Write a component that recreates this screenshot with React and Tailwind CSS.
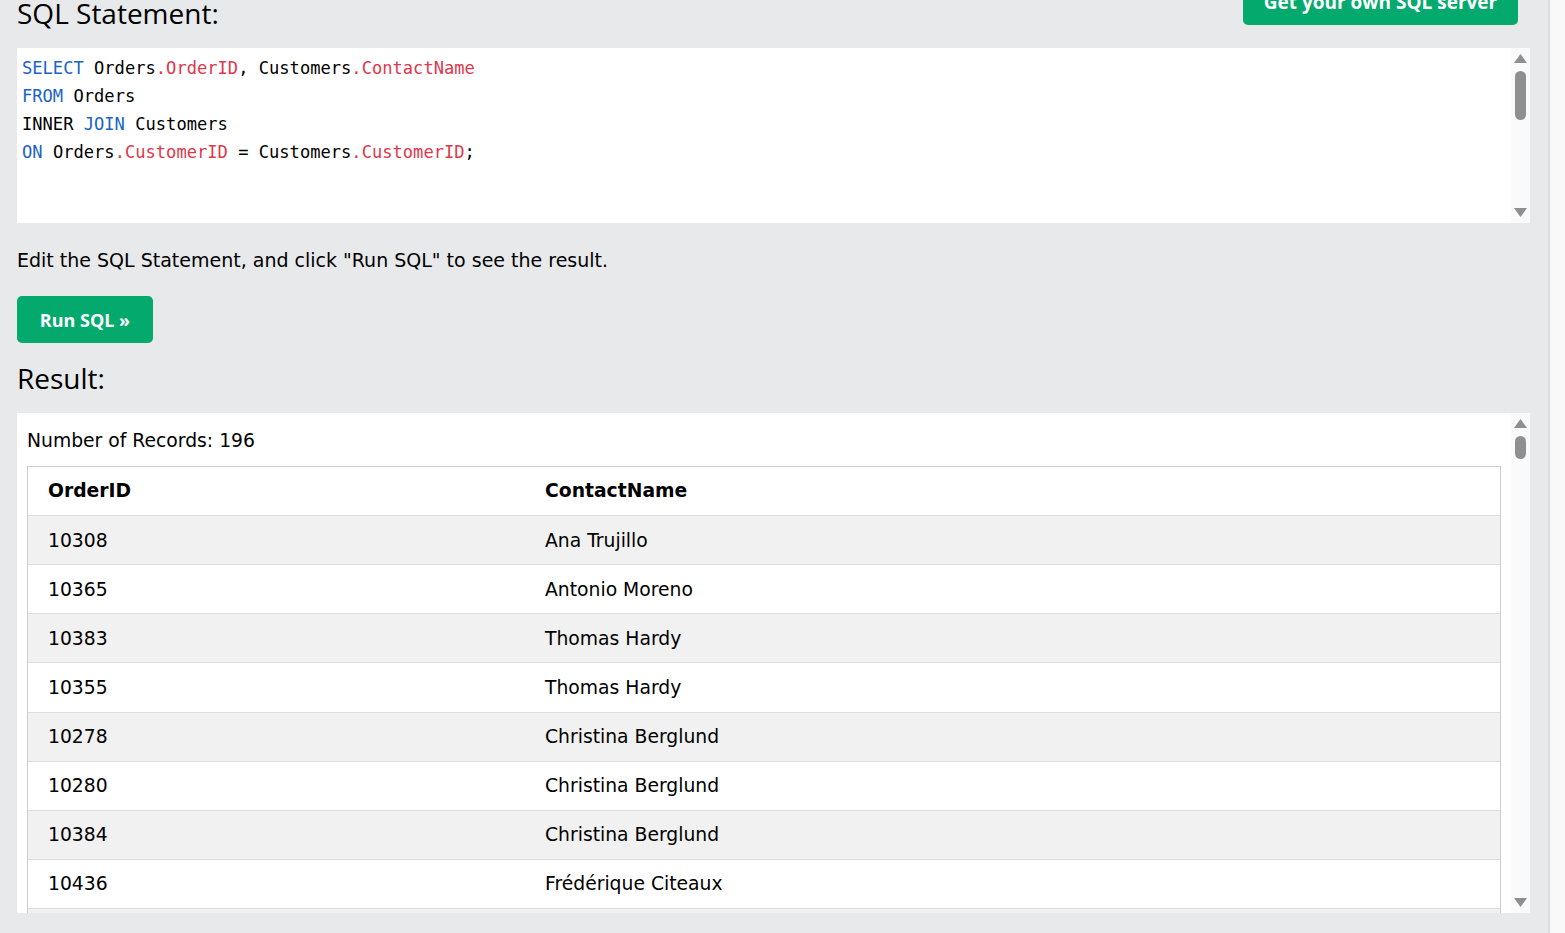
import React from 'react';

const rows = [
  ['10308', 'Ana Trujillo'],
  ['10365', 'Antonio Moreno'],
  ['10383', 'Thomas Hardy'],
  ['10355', 'Thomas Hardy'],
  ['10278', 'Christina Berglund'],
  ['10280', 'Christina Berglund'],
  ['10384', 'Christina Berglund'],
  ['10436', 'Frédérique Citeaux'],
  ['10265', 'Frédérique Citeaux'],
];

const Kw = ({ children }) => <span className="text-[#1a63c9]">{children}</span>;
const Fld = ({ children }) => <span className="text-[#e0374b]">{children}</span>;

const UpArrow = () => (
  <svg width="13" height="9" viewBox="0 0 13 9" className="block">
    <path d="M6.5 0 L13 9 L0 9 Z" fill="#8f8f8f" />
  </svg>
);

const DownArrow = () => (
  <svg width="13" height="9" viewBox="0 0 13 9" className="block">
    <path d="M0 0 L13 0 L6.5 9 Z" fill="#8f8f8f" />
  </svg>
);

const ScrollTrack = ({ thumbTop, thumbHeight, arrowGap }) => (
  <div className="w-[19px] bg-[#fafafa] flex flex-col items-center justify-between" style={{ paddingTop: arrowGap, paddingBottom: arrowGap }}>
    <div className="flex flex-col items-center">
      <UpArrow />
      <div className="w-[11px] rounded-full bg-[#8f8f8f]" style={{ marginTop: thumbTop, height: thumbHeight }} />
    </div>
    <DownArrow />
  </div>
);

const App = () => {
  return (
    <div className="flex h-[933px] w-full overflow-hidden" style={{ fontFamily: '"DejaVu Sans", Verdana, sans-serif' }}>
      <div className="w-[1548px] shrink-0 bg-[#e7e9eb] pl-[17px] pr-[18px] text-black">
        {/* header */}
        <div className="h-[48px] flex justify-between items-start">
          <h3 className="mt-[-5px] text-[28px] leading-[36px] font-normal" style={{ fontFamily: '"Open Sans", sans-serif' }}>
            SQL Statement:
          </h3>
          <a className="mt-[-21px] mr-[12px] h-[46px] w-[275px] flex items-center justify-center rounded-[5px] bg-[#04aa6d] text-white text-[19px] font-bold" style={{ fontFamily: '"Open Sans", sans-serif' }}>
            Get your own SQL server
          </a>
        </div>

        {/* editor */}
        <div className="h-[175px] bg-white flex">
          <div className="flex-1 pl-[5px] pt-[6px] text-[17.1px] leading-[28px] whitespace-pre" style={{ fontFamily: '"DejaVu Sans Mono", monospace' }}>
            <div><Kw>SELECT</Kw> Orders<Fld>.OrderID</Fld>, Customers<Fld>.ContactName</Fld></div>
            <div><Kw>FROM</Kw> Orders</div>
            <div>INNER <Kw>JOIN</Kw> Customers</div>
            <div><Kw>ON</Kw> Orders<Fld>.CustomerID</Fld> = Customers<Fld>.CustomerID</Fld>;</div>
          </div>
          <ScrollTrack thumbTop={8} thumbHeight={49} arrowGap={6} />
        </div>

        <p className="mt-[23px] mb-[-1px] text-[19px] leading-[28px]">
          Edit the SQL Statement, and click "Run SQL" to see the result.
        </p>

        <button className="mt-[23px] h-[47px] w-[136px] pt-[1px] rounded-[5px] bg-[#04aa6d] text-white text-[18px] font-bold" style={{ fontFamily: '"Open Sans", sans-serif' }}>
          Run SQL »
        </button>

        <h3 className="mt-[17px] text-[28px] leading-[36px] font-normal" style={{ fontFamily: '"Open Sans", sans-serif' }}>
          Result:
        </h3>

        {/* result */}
        <div className="mt-[17px] h-[500px] bg-white flex">
          <div className="flex-1 overflow-hidden pl-[10px] pr-[10px] pt-[15px]">
            <div className="text-[18.75px] leading-[26px]">Number of Records: 196</div>
            <div className="mt-[12px] border border-[#cccccc] text-[18.75px]">
              <div className="flex h-[49px] items-center pt-[1px] border-b border-[#dddddd] bg-white font-bold">
                <div className="w-[496px] pl-[20px]">OrderID</div>
                <div className="flex-1 pl-[21px]">ContactName</div>
              </div>
              {rows.map(([id, name], i) => (
                <div
                  key={i}
                  className={`flex h-[49.125px] items-center pt-[1px] border-b border-[#dddddd] ${i % 2 === 0 ? 'bg-[#f1f1f1]' : 'bg-white'}`}
                >
                  <div className="w-[496px] pl-[20px]">{id}</div>
                  <div className="flex-1 pl-[21px]">{name}</div>
                </div>
              ))}
            </div>
          </div>
          <ScrollTrack thumbTop={8} thumbHeight={23} arrowGap={6} />
        </div>
      </div>
      <div className="w-[2px] shrink-0 bg-[#dadcde]" />
      <div className="flex-1 bg-[#f9f9f9]" />
    </div>
  );
};

export default App;
